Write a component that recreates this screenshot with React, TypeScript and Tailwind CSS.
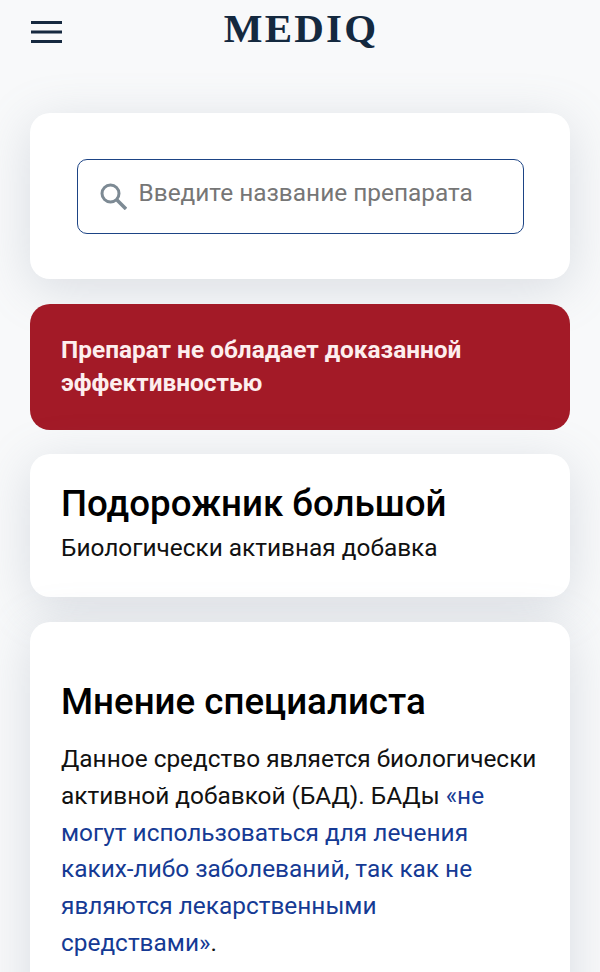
export default function App() {
  const shadow = "shadow-[0_10px_50px_rgba(120,135,155,0.24)]";
  return (
    <div className="h-[972px] overflow-hidden bg-[#f8f9fa] font-['Roboto',sans-serif]">
      <header className="relative flex h-[63px] items-center px-[31px]">
        <svg width="31" height="22" viewBox="0 0 31 22" className="mt-[1px]" aria-hidden="true">
          <path d="M0 1.5h31M0 11h31M0 20.5h31" stroke="#16293f" strokeWidth="3" />
        </svg>
        <div className="absolute inset-x-0 top-[4px] pl-[2px] text-center font-['Liberation_Serif',serif] text-[41px] leading-[48px] font-bold tracking-[2.2px] text-[#14293f]">
          MEDIQ
        </div>
      </header>
      <main className="mt-[50px] flex flex-col px-[30px]">
        <section className={`flex h-[166px] items-center justify-center rounded-[20px] bg-white ${shadow}`}>
          <div className="flex h-[75px] w-[447px] items-center rounded-[10px] border border-[#1d4485] pl-[21px]">
            <svg width="28" height="28" viewBox="0 0 28 28" fill="none" aria-hidden="true" className="mb-[1px]">
              <circle cx="11.5" cy="11.5" r="8.5" stroke="#7d8a94" strokeWidth="3" />
              <path d="M17.5 17.5L27 27" stroke="#7d8a94" strokeWidth="3.5" />
            </svg>
            <span className="mb-[6px] ml-[12px] text-[24.4px] text-[#767676]">Введите название препарата</span>
          </div>
        </section>
        <section className="mt-[25px] h-[126px] rounded-[20px] bg-[#a31a27] px-[31px] pt-[29px] text-[24.4px] leading-[33px] font-bold text-[#fdeeee]">
          Препарат не обладает доказанной
          <br />
          эффективностью
        </section>
        <section className={`mt-[24px] h-[143px] rounded-[20px] bg-white px-[31px] pt-[28px] ${shadow}`}>
          <h1 className="text-[36.7px] leading-[44px] font-medium text-black">Подорожник большой</h1>
          <p className="mt-[7px] text-[24.4px] leading-[30px] text-[#111]">Биологически активная добавка</p>
        </section>
        <section className={`mt-[25px] h-[400px] rounded-[20px] bg-white px-[31px] pt-[58px] ${shadow}`}>
          <h2 className="text-[36.7px] leading-[44px] font-medium text-black">Мнение специалиста</h2>
          <p className="mt-[17px] text-[24.4px] leading-[36.8px] text-[#111]">
            Данное средство является биологически активной добавкой (БАД). БАДы{" "}
            <a className="text-[#153a94]">
              «не могут использоваться для лечения <span className="whitespace-nowrap">каких-либо</span> заболеваний, так как не являются лекарственными
              <br />
              средствами»
            </a>
            .
          </p>
        </section>
      </main>
    </div>
  );
}
